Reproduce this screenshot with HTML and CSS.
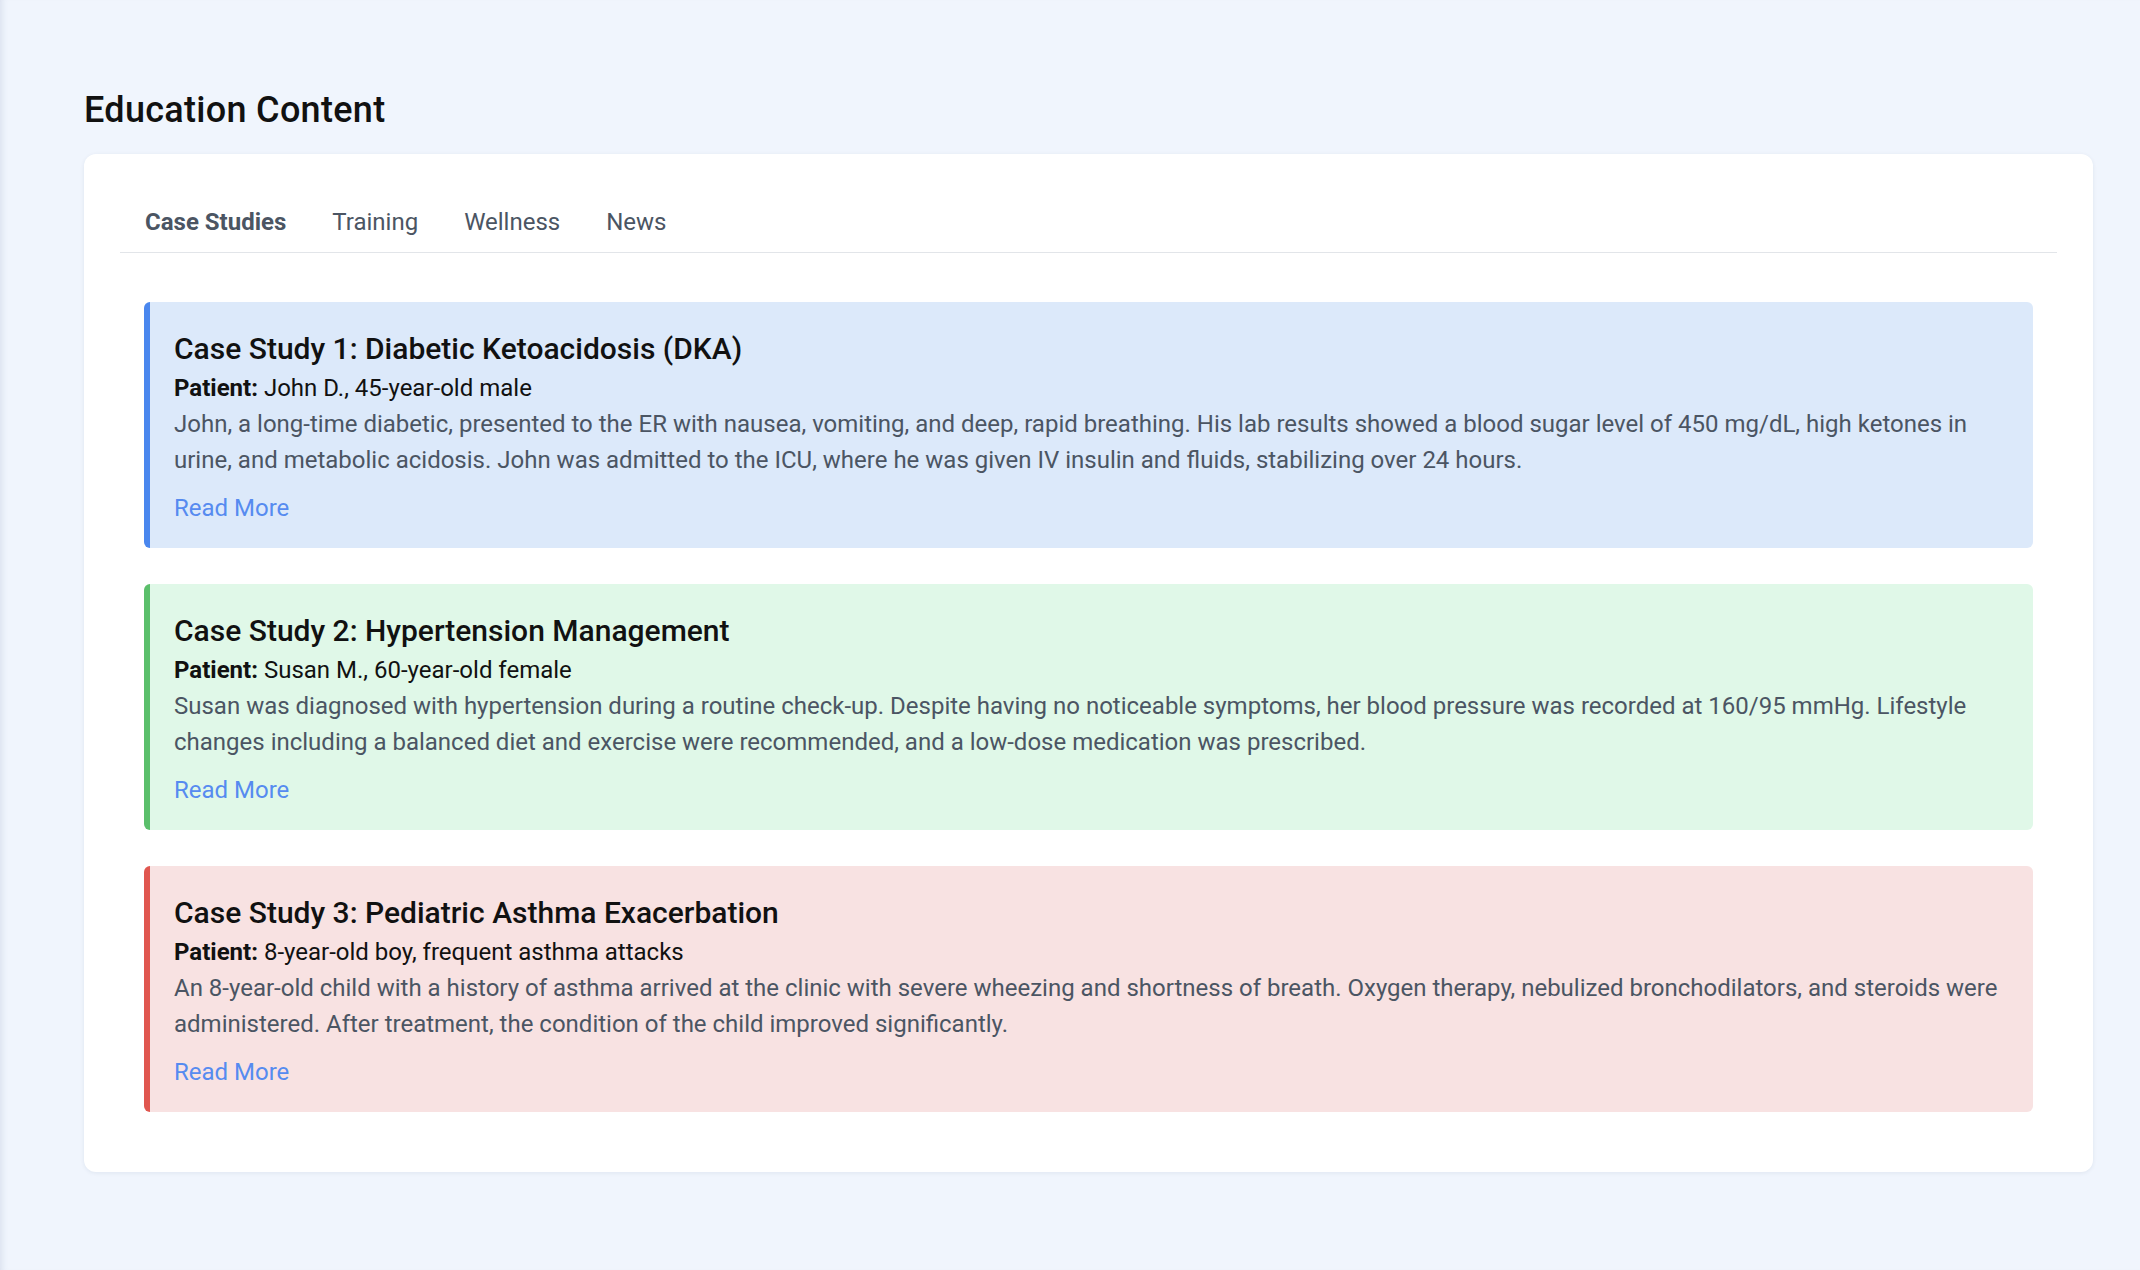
FILE: index.html
```html
<!DOCTYPE html>
<html lang="en">
<head>
<meta charset="utf-8">
<title>Education Content</title>
<link rel="stylesheet" href="styles.css">
</head>
<body>
<main class="page">
  <h1 class="page-title">Education Content</h1>
  <section class="card">
    <nav class="tabs">
      <button class="tab active">Case Studies</button>
      <button class="tab">Training</button>
      <button class="tab">Wellness</button>
      <button class="tab">News</button>
    </nav>
    <div class="panel">
      <article class="case blue">
        <h3 class="case-title">Case Study 1: Diabetic Ketoacidosis (DKA)</h3>
        <p class="patient"><strong>Patient:</strong> John D., 45-year-old male</p>
        <p class="desc">John, a long-time diabetic, presented to the ER with nausea, vomiting, and deep, rapid breathing. His lab results showed a blood sugar level of 450 mg/dL, high ketones in urine, and metabolic acidosis. John was admitted to the ICU, where he was given IV insulin and fluids, stabilizing over 24 hours.</p>
        <a class="more" href="#">Read More</a>
      </article>
      <article class="case green">
        <h3 class="case-title">Case Study 2: Hypertension Management</h3>
        <p class="patient"><strong>Patient:</strong> Susan M., 60-year-old female</p>
        <p class="desc">Susan was diagnosed with hypertension during a routine check-up. Despite having no noticeable symptoms, her blood pressure was recorded at 160/95 mmHg. Lifestyle changes including a balanced diet and exercise were recommended, and a low-dose medication was prescribed.</p>
        <a class="more" href="#">Read More</a>
      </article>
      <article class="case red">
        <h3 class="case-title">Case Study 3: Pediatric Asthma Exacerbation</h3>
        <p class="patient"><strong>Patient:</strong> 8-year-old boy, frequent asthma attacks</p>
        <p class="desc">An 8-year-old child with a history of asthma arrived at the clinic with severe wheezing and shortness of breath. Oxygen therapy, nebulized bronchodilators, and steroids were administered. After treatment, the condition of the child improved significantly.</p>
        <a class="more" href="#">Read More</a>
      </article>
    </div>
  </section>
</main>
</body>
</html>
```
FILE: styles.css
```css
* { box-sizing: border-box; }
html, body { margin: 0; padding: 0; }
body {
  background: #f0f5fd;
  font-family: Roboto, "Liberation Sans", Arial, sans-serif;
  color: #111;
  min-height: 1270px;
  box-shadow: inset 7px 0 6px -5px rgba(60, 80, 120, 0.12);
}
.page { padding: 86px 47px 40px 84px; }
.page-title {
  margin: 0 0 20px;
  font-size: 36px;
  line-height: 48px;
  font-weight: 500;
  letter-spacing: 0.3px;
  color: #111;
}
.card {
  background: #fff;
  border-radius: 12px;
  box-shadow: 0 1px 4px rgba(30, 50, 90, 0.08);
  padding: 36px;
}
.tabs {
  display: flex;
  border-bottom: 1px solid #e2e5e9;
}
.tab {
  font-family: inherit;
  background: none;
  border: 0;
  border-bottom: 2px solid transparent;
  padding: 14px 23px 10px;
  font-size: 24px;
  line-height: 36px;
  color: #4b5563;
  cursor: pointer;
}
.tab:first-child { padding-left: 25px; }
.tab.active { font-weight: 700; color: #4b5563; }
.panel {
  padding: 49px 24px 24px;
  display: flex;
  flex-direction: column;
  gap: 36px;
}
.case {
  border-left: 6px solid;
  border-radius: 6px;
  padding: 26px 24px 22px;
}
.case.blue { background: #dce9fa; border-color: #4a87ee; }
.case.green { background: #e0f8e8; border-color: #5bbf6b; }
.case.red { background: #f8e2e2; border-color: #e0564f; }
.case-title {
  margin: 0;
  font-size: 30px;
  line-height: 42px;
  font-weight: 500;
  color: #111;
}
.patient {
  margin: 0;
  font-size: 24px;
  line-height: 36px;
  color: #111;
}
.patient strong { font-weight: 700; }
.desc {
  margin: 0;
  font-size: 24px;
  line-height: 36px;
  color: #4b5563;
}
.more {
  display: inline-block;
  margin-top: 12px;
  font-size: 24px;
  line-height: 36px;
  color: #568bf0;
  text-decoration: none;
}
```
